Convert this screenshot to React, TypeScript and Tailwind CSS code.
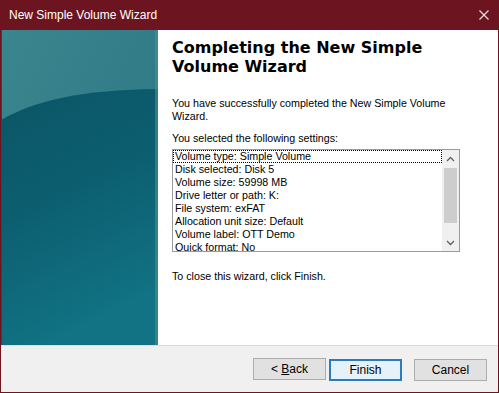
import React from "react";

const settings = [
  "Volume type: Simple Volume",
  "Disk selected: Disk 5",
  "Volume size: 59998 MB",
  "Drive letter or path: K:",
  "File system: exFAT",
  "Allocation unit size: Default",
  "Volume label: OTT Demo",
  "Quick format: No",
];

function SidePanel() {
  return (
    <div className="relative w-[157px] shrink-0 overflow-hidden bg-[#0e6273]">
      <svg className="absolute inset-0" width="157" height="315" viewBox="0 0 157 315">
        <defs>
          <linearGradient id="top" x1="0" y1="0" x2="1" y2="1">
            <stop offset="0" stopColor="#3b858e" />
            <stop offset="1" stopColor="#2a7582" />
          </linearGradient>
          <linearGradient id="body" x1="0" y1="0" x2="0.3" y2="1">
            <stop offset="0" stopColor="#0b5566" />
            <stop offset="0.5" stopColor="#0c5f70" />
            <stop offset="1" stopColor="#117383" />
          </linearGradient>
        </defs>
        <rect width="157" height="315" fill="url(#top)" />
        <path d="M0 90 C 35 70, 80 60, 157 59 L157 315 L0 315 Z" fill="url(#body)" />
        <rect x="154" width="3" height="315" fill="#4c8f99" opacity="0.6" />
        <rect width="1" height="315" fill="#1f4e58" />
      </svg>
    </div>
  );
}

function Chevron({ up }: { up?: boolean }) {
  return (
    <svg width="9" height="6" viewBox="0 0 9 6">
      <path d={up ? "M1 5 L4.5 1.5 L8 5" : "M1 1 L4.5 4.5 L8 1"} stroke="#606060" strokeWidth="1.3" fill="none" />
    </svg>
  );
}

function SettingsList() {
  return (
    <div className="flex h-[103px] w-[288px] border border-[#9a9a9a] bg-white">
      <div className="flex-1 overflow-hidden">
        {settings.map((s, i) => (
          <div
            key={s}
            className={
              "h-[13px] pl-[2px] leading-[13px] " +
              (i === 0 ? "outline outline-1 outline-dotted outline-black -outline-offset-1" : "")
            }
          >
            {s}
          </div>
        ))}
      </div>
      <div className="flex w-[17px] flex-col bg-[#f0f0f0]">
        <div className="flex h-[17px] items-center justify-center">
          <Chevron up />
        </div>
        <div className="flex-1 px-[2px] py-[1px]">
          <div className="h-[55px] bg-[#cdcdcd]" />
        </div>
        <div className="flex h-[17px] items-center justify-center">
          <Chevron />
        </div>
      </div>
    </div>
  );
}

function Button({ label, primary }: { label: React.ReactNode; primary?: boolean }) {
  return (
    <button
      className={
        "h-[22px] w-[73px] text-[12px] text-black " +
        (primary ? "border-2 border-[#2b7bc0] bg-[#e5f1fb]" : "border border-[#adadad] bg-[#e1e1e1]")
      }
    >
      {label}
    </button>
  );
}

export default function App() {
  return (
    <div
      className="flex h-[393px] w-[499px] flex-col bg-[#6c1520] px-[1px] pb-[1px]"
      style={{ fontFamily: '"Liberation Sans", Arial, sans-serif' }}
    >
      <div className="flex h-[30px] shrink-0 items-center justify-between pl-[8px] pr-[9px] text-[12px] text-white">
        <span>New Simple Volume Wizard</span>
        <svg width="10" height="10" viewBox="0 0 10 10">
          <path d="M0.5 0.5 L9.5 9.5 M9.5 0.5 L0.5 9.5" stroke="#f3e6e8" strokeWidth="1.1" />
        </svg>
      </div>
      <div className="flex h-[315px] shrink-0">
        <SidePanel />
        <div className="flex-1 bg-white pl-[14px] pt-[8px] text-[10.7px] text-black">
          <h1
            className="text-[16px] font-bold leading-[19px]"
            style={{ fontFamily: '"DejaVu Sans", Verdana, sans-serif' }}
          >
            Completing the New Simple
            <br />
            Volume Wizard
          </h1>
          <p className="mt-[21px] leading-[13px]">
            You have successfully completed the New Simple Volume
            <br />
            Wizard.
          </p>
          <p className="mt-[9px] leading-[13px]">You selected the following settings:</p>
          <div className="mt-[4px]">
            <SettingsList />
          </div>
          <p className="mt-[18px] leading-[13px]">To close this wizard, click Finish.</p>
        </div>
      </div>
      <div className="flex flex-1 items-center justify-end border-t border-[#dcdcdc] bg-[#f0f0f0] pr-[11px]">
        <Button
          label={
            <>
              &lt; <span className="underline">B</span>ack
            </>
          }
        />
        <div className="ml-[3px]">
          <Button label="Finish" primary />
        </div>
        <div className="ml-[12px]">
          <Button label="Cancel" />
        </div>
      </div>
    </div>
  );
}
